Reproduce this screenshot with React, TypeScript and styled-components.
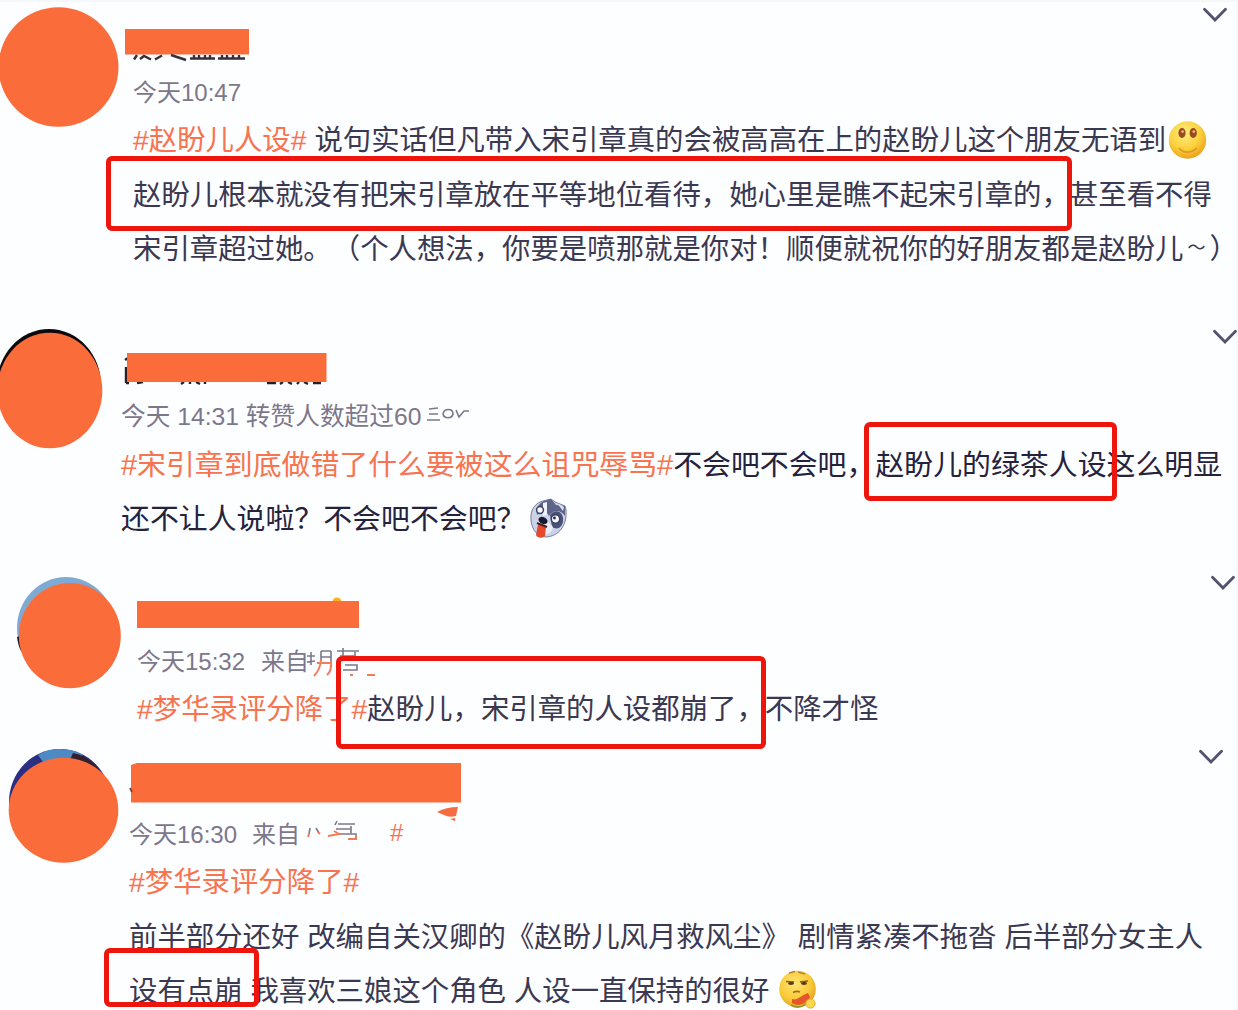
import * as React from 'react';
import styled, { createGlobalStyle } from 'styled-components';

const palette = {
  orange: '#fa6d3b',
  topic: '#f8734f',
  text: '#3b3852',
  meta: '#7d778b',
  mark: '#ee150c',
};

const GlobalStyle = createGlobalStyle`
  body {
    margin: 0;
    background: #fdfeff;
  }
`;

const Page = styled.main`
  width: 1238px;
  height: 1010px;
  box-sizing: border-box;
  overflow: hidden;
  background: #fdfeff;
  box-shadow: inset -2px 2px 0 #f5f7fa;
  font-family: 'Liberation Sans', 'Noto Sans CJK SC', sans-serif;
  text-spacing-trim: space-all;
`;

const PostBlock = styled.article<{ $height: number; $indent: number }>`
  position: relative;
  display: grid;
  grid-template-columns: ${({ $indent }) => $indent}px 1fr;
  height: ${({ $height }) => $height}px;
`;

const Avatar = styled.svg`
  display: block;
  width: 124px;
  height: 130px;
`;

const PostBody = styled.div`
  min-width: 0;
`;

const PostHead = styled.header<{ $height: number }>`
  display: flex;
  justify-content: space-between;
  align-items: flex-start;
  height: ${({ $height }) => $height}px;
`;

const NameCover = styled.svg`
  display: block;
  overflow: visible;
`;

const Chevron = styled.svg<{ $right: number }>`
  width: 26px;
  height: 17px;
  margin: 6px ${({ $right }) => $right}px 0 0;
  fill: none;
  stroke: #55506f;
  stroke-width: 2.8;
  stroke-linecap: round;
`;

const Meta = styled.div<{ $size?: number }>`
  display: flex;
  align-items: center;
  height: 40px;
  box-sizing: border-box;
  padding-bottom: 5px;
  font-size: ${({ $size }) => $size || 24}px;
  color: ${palette.meta};
  white-space: pre;
`;

const Source = styled.span<{ $gap: number }>`
  margin-left: ${({ $gap }) => $gap}px;
`;

const Line = styled.p<{ $size?: number; $dark?: boolean }>`
  display: flex;
  align-items: center;
  height: 54.4px;
  box-sizing: border-box;
  margin: 0;
  padding-bottom: ${({ $dark }) => ($dark ? 3 : 5)}px;
  font-size: ${({ $size }) => $size || 28.4}px;
  color: ${({ $dark }) => ($dark ? '#25223e' : palette.text)};
  white-space: pre;
`;

const Topic = styled.span`
  color: ${palette.topic};
`;

const Tilde = styled.span`
  display: inline-block;
  width: 31px;
  text-align: center;
  font-size: 18px;
`;

const Emoji = styled.svg<{ $gap: number }>`
  width: 40px;
  height: 40px;
  flex: none;
  margin: 4px 0 0 ${({ $gap }) => $gap}px;
`;

const Scrap = styled.svg`
  flex: none;
  overflow: visible;
  fill: none;
  stroke: ${palette.meta};
  stroke-width: 1.6;
`;

// red frame drawn over the quoted words
const Mark = styled.div<{ $x: number; $y: number; $w: number; $h: number }>`
  position: absolute;
  left: ${({ $x }) => $x}px;
  top: ${({ $y }) => $y}px;
  width: ${({ $w }) => $w}px;
  height: ${({ $h }) => $h}px;
  box-sizing: border-box;
  border: 5.5px solid ${palette.mark};
  border-radius: 6px;
`;

interface PostProps {
  height: number;
  indent: number;
  headHeight: number;
  chevronRight: number;
  avatar: React.ReactNode;
  name: React.ReactNode;
  children: React.ReactNode;
}

const Post: React.FC<PostProps> = ({
  height,
  indent,
  headHeight,
  chevronRight,
  avatar,
  name,
  children,
}) => (
  <PostBlock $height={height} $indent={indent}>
    <Avatar viewBox="0 0 124 130">{avatar}</Avatar>
    <PostBody>
      <PostHead $height={headHeight}>
        {name}
        <Chevron $right={chevronRight} viewBox="0 0 26 17">
          <path d="M2.5 3.2L13 14L23.5 3.2" />
        </Chevron>
      </PostHead>
      {children}
    </PostBody>
  </PostBlock>
);

const SmileEmoji = () => (
  <Emoji $gap={1} viewBox="0 0 40 40">
    <defs>
      <radialGradient id="smile" cx="42%" cy="32%" r="68%">
        <stop offset="0" stopColor="#ffed83" />
        <stop offset="0.6" stopColor="#fbd13c" />
        <stop offset="1" stopColor="#eda31c" />
      </radialGradient>
    </defs>
    <circle cx="20.5" cy="20" r="18.7" fill="url(#smile)" />
    <ellipse cx="15" cy="13" rx="3.6" ry="5" fill="#9b4a1a" />
    <ellipse cx="26.2" cy="13" rx="3.6" ry="5" fill="#9b4a1a" />
    <circle cx="15.6" cy="11.6" r="1.4" fill="#e8b38c" />
    <circle cx="26.8" cy="11.6" r="1.4" fill="#e8b38c" />
    <path d="M12 28C16 33.500 25 33.500 29.500 28" fill="none" stroke="#dd9a24" strokeWidth="1.6" />
  </Emoji>
);

const HuskyEmoji = () => (
  <Emoji $gap={4} viewBox="0 0 40 40">
    <path d="M2 22C1 12 6 5 14 3L22 1L26 4L36 8L37 12C38 24 33 37 18 39C9 39 3 33 2 22Z" fill="#ccd3e8" stroke="#747d9e" strokeWidth="1" />
    <path d="M15 3L22 1L27 7L36 8L36 18C31 11 24 12 20 18C18 13 12 12 8 17C7 10 9 6 15 3Z" fill="#5d6488" />
    <path d="M28 5L35 9L34 13Z" fill="#dfe4f2" />
    <path d="M21 17C25 11 33 12 34 20C35 28 29 33 23 29Z" fill="#4b5278" />
    <path d="M14 5L18 4L18 17L14 18Z" fill="#eef2ff" />
    <circle cx="11" cy="12" r="3.4" fill="#f7f9ff" stroke="#3b4163" strokeWidth="1.5" />
    <circle cx="26.5" cy="21" r="4.2" fill="#f7f9ff" stroke="#3b4163" strokeWidth="1.5" />
    <circle cx="25.5" cy="20" r="1.4" fill="#252a45" />
    <path d="M10 20C14 17 20 25 24 29C23 35 18 37 14 36C8 34 7 26 10 20Z" fill="#e9edf8" />
    <ellipse cx="14" cy="22.5" rx="4.8" ry="3.4" fill="#151a2e" transform="rotate(25 14 22.5)" />
    <path d="M9 26L17 29L16 38C13 41 8 40 7 37Z" fill="#e6482c" />
    <path d="M8 25L18 29" stroke="#491c26" strokeWidth="2" />
  </Emoji>
);

const ThinkingEmoji = () => (
  <Emoji $gap={9} viewBox="0 0 40 40">
    <defs>
      <radialGradient id="thinking" cx="42%" cy="35%" r="68%">
        <stop offset="0" stopColor="#ffe574" />
        <stop offset="0.65" stopColor="#f9c936" />
        <stop offset="1" stopColor="#e59d22" />
      </radialGradient>
    </defs>
    <circle cx="19.5" cy="19" r="18.3" fill="url(#thinking)" />
    <path d="M11 3L17 1.5M20 2L27 4" stroke="#b9832b" strokeWidth="1.4" />
    <path d="M8 11.5L16 12M22 12L30 11" stroke="#8a5a1c" strokeWidth="1.5" />
    <ellipse cx="13" cy="13.500" rx="3" ry="1.4" fill="#5b3915" />
    <ellipse cx="26" cy="13.500" rx="3" ry="1.4" fill="#5b3915" />
    <path d="M15 22.5Q19 20.5 22 22" fill="none" stroke="#a86a1d" strokeWidth="1.6" />
    <path d="M14 29C19 31 22 26 30 23L32 27C29 34 20 37 14 33Z" fill="#e5562b" />
    <path d="M13 35C18 38 23 38 28 34" fill="none" stroke="#8f9a2a" strokeWidth="1.5" />
    <circle cx="32.5" cy="33.5" r="4.6" fill="#fbd84e" stroke="#e2a92b" />
  </Emoji>
);

const App: React.FC = () => (
  <>
    <GlobalStyle />
    <Page>
      <Post
        height={322}
        indent={133}
        headHeight={73}
        chevronRight={10.5}
        avatar={<ellipse cx="58.500" cy="67" rx="60" ry="59.7" fill={palette.orange} />}
        name={
          <NameCover width="116" height="62">
            <path d="M-8 29H116V54.5H-8Z" fill={palette.orange} />
            <path
              d="M1 59.5L4 55M7 59L11 56L18 59.5M22 59.5L29 55.5M38 55L53 60M57 58.500H82M85 58.500H112M61 55V59M66 55V59M72 55V59M77 55V59M89 55V59M94 55V59M100 55V59M106 55V59"
              fill="none"
              stroke="#35313c"
              strokeWidth="2.4"
            />
          </NameCover>
        }
      >
        <Meta>今天10:47</Meta>
        <Line>
          <Topic>#赵盼儿人设#</Topic>
          <span> 说句实话但凡带入宋引章真的会被高高在上的赵盼儿这个朋友无语到</span>
          <SmileEmoji />
        </Line>
        <Line>赵盼儿根本就没有把宋引章放在平等地位看待，她心里是瞧不起宋引章的，甚至看不得</Line>
        <Line>
          <span>宋引章超过她。（个人想法，你要是喷那就是你对！顺便就祝你的好朋友都是赵盼儿</span>
          <Tilde>～</Tilde>
          <span>）</span>
        </Line>
        <Mark $x={106} $y={156} $w={965.5} $h={75} />
      </Post>

      <Post
        height={246}
        indent={121}
        headHeight={74}
        chevronRight={0.5}
        avatar={
          <>
            <ellipse cx="49" cy="63" rx="52" ry="56" fill="#0b0a0d" />
            <ellipse cx="49.800" cy="68.500" rx="52.500" ry="57.800" fill={palette.orange} />
          </>
        }
        name={
          <NameCover width="206" height="64">
            <path d="M4 38L7 36M5 45V61M5 61H8M16 61L22 60M63 60L60 62M69 60V62M75 60L79 62M84 60V62M146 61H155M159 62L162 60M167 60L171 62M176 62L178 60M183 60L187 62M192 61H200" fill="none" stroke="#2c1f24" strokeWidth="2.4" />
            <path d="M6 31H205.500V60H6Z" fill={palette.orange} />
          </NameCover>
        }
      >
        <Meta $size={24.7}>
          <span>今天 14:31 转赞人数超过60</span>
          <Scrap width="50" height="24">
            <path d="M8 7L17 6M8 12H17M6 18H19M22 12C23 6 32 6 32 12C31 17 23 17 22 12M35 8L38 15L43 9L48 9" />
          </Scrap>
        </Meta>
        <Line $size={28.9} $dark>
          <Topic>#宋引章到底做错了什么要被这么诅咒辱骂#</Topic>
          <span>不会吧不会吧，赵盼儿的绿茶人设这么明显</span>
        </Line>
        <Line $size={28.9} $dark>
          <span>还不让人说啦？不会吧不会吧？</span>
          <HuskyEmoji />
        </Line>
        <Mark $x={864} $y={100} $w={253} $h={79} />
      </Post>

      <Post
        height={174}
        indent={137}
        headHeight={74}
        chevronRight={2.5}
        avatar={
          <>
            <ellipse cx="66" cy="60" rx="49" ry="51" fill="#7faad3" />
            <path d="M17 69L20 68L23 86C19 81 18 75 17 69Z" fill="#18131c" />
            <ellipse cx="69.800" cy="67.600" rx="51" ry="52.600" fill={palette.orange} />
          </>
        }
        name={
          <NameCover width="222" height="62">
            <circle cx="200" cy="34" r="4.500" fill="#fbb01f" />
            <path d="M0 33H222V60H0Z" fill={palette.orange} />
          </NameCover>
        }
      >
        <Meta>
          <span>今天15:32</span>
          <Source $gap={16}>来自</Source>
          <Scrap width="60" height="30">
            <path d="M-2 11H6M2 7V20M-2 17L6 16M12 6H22M12 12H22M12 6V16M22 6V18M28 6H50M34 3V14M31 11H46V7M31 15H52M36 20H48V25H34" />
            <path d="M12 15Q11 25 5 31M22 16Q23 26 18 30M8 18H22M41 30H44M58 30H66" stroke="#f27d5a" strokeWidth="2" />
          </Scrap>
        </Meta>
        <Line>
          <Topic>#梦华录评分降了#</Topic>
          <span>赵盼儿，宋引章的人设都崩了，不降才怪</span>
        </Line>
        <Mark $x={336} $y={88} $w={429.500} $h={93} />
      </Post>

      <Post
        height={268}
        indent={129}
        headHeight={73}
        chevronRight={14.500}
        avatar={
          <>
            <ellipse cx="60" cy="60" rx="51" ry="53" fill="#2c2e82" />
            <path d="M38 13C50 5 70 5 83 13L73 19L43 20Z" fill="#4d8ac4" />
            <path d="M73 11C85 13 95 21 101 30L88 26L70 18Z" fill="#34202d" />
            <ellipse cx="63.500" cy="68.200" rx="54.800" ry="52.500" fill={palette.orange} />
          </>
        }
        name={
          <NameCover width="332" height="84">
            <path d="M2 23L8 21H332V60.500H2Z" fill={palette.orange} />
            <path d="M1 46L3 50" stroke="#8a4630" strokeWidth="2" />
            <path d="M308 70Q317 65 329 65L327 74Q320 76 315 73ZM321 77L326 79V76Z" fill="#f56b42" />
          </NameCover>
        }
      >
        <Meta>
          <span>今天16:30</span>
          <Source $gap={15}>来自</Source>
          <Scrap width="90" height="30">
            <path d="M10 10L9 16M16 10L19 15M38 6H55M36 11H51M37 16H50M51 8V16H56V21M37 3L35 7" />
            <path d="M8 19L9 16M18 14L20 16M28 18L39 16L34 13M48 21H56V17" stroke="#f27d5a" strokeWidth="2" />
          </Scrap>
          <Topic>#</Topic>
        </Meta>
        <Line>
          <Topic>#梦华录评分降了#</Topic>
        </Line>
        <Line>前半部分还好 改编自关汉卿的《赵盼儿风月救风尘》 剧情紧凑不拖沓 后半部分女主人</Line>
        <Line>
          <span>设有点崩 我喜欢三娘这个角色 人设一直保持的很好</span>
          <ThinkingEmoji />
        </Line>
        <Mark $x={104} $y={206} $w={155} $h={59} />
      </Post>
    </Page>
  </>
);

export default App;
